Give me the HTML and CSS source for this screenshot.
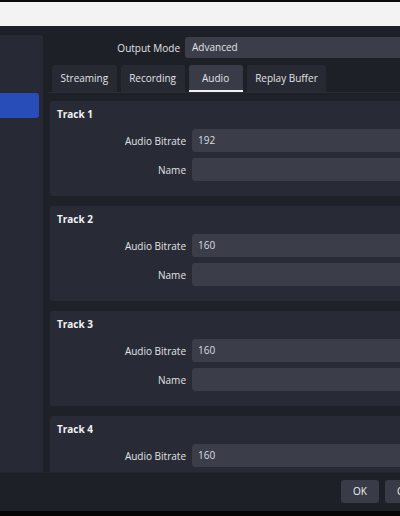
FILE: index.html
```html
<!DOCTYPE html>
<html>
<head>
<meta charset="utf-8">
<link rel="stylesheet" href="styles.css">
</head>
<body>
<div class="screen">
  <div class="topblack"></div>
  <div class="topstrip"></div>
  <div class="app">
    <div class="main">
      <div class="sidebar">
        <div class="side-item"></div>
        <div class="side-item selected"></div>
      </div>
      <div class="right">
        <div class="mode-row">
          <div class="mode-label">Output Mode</div>
          <div class="combo">Advanced</div>
        </div>
        <div class="tabs">
          <div class="tab">Streaming</div>
          <div class="tab">Recording</div>
          <div class="tab active">Audio</div>
          <div class="tab">Replay Buffer</div>
        </div>
        <div class="pane">
          <div class="group">
            <div class="group-title">Track 1</div>
            <div class="row"><div class="label">Audio Bitrate</div><div class="field">192</div></div>
            <div class="row"><div class="label">Name</div><div class="field"></div></div>
          </div>
          <div class="group">
            <div class="group-title">Track 2</div>
            <div class="row"><div class="label">Audio Bitrate</div><div class="field">160</div></div>
            <div class="row"><div class="label">Name</div><div class="field"></div></div>
          </div>
          <div class="group">
            <div class="group-title">Track 3</div>
            <div class="row"><div class="label">Audio Bitrate</div><div class="field">160</div></div>
            <div class="row"><div class="label">Name</div><div class="field"></div></div>
          </div>
          <div class="group">
            <div class="group-title">Track 4</div>
            <div class="row"><div class="label">Audio Bitrate</div><div class="field">160</div></div>
          </div>
        </div>
      </div>
    </div>
    <div class="bottom">
      <div class="buttons">
        <div class="btn">OK</div>
        <div class="btn">Cancel</div>
      </div>
    </div>
  </div>
  <div class="botblack"></div>
</div>
</body>
</html>
```
FILE: styles.css
```css
html, body {
  margin: 0;
  padding: 0;
  background: #000;
  overflow: hidden;
}
body {
  font-family: "Open Sans", "Noto Sans", sans-serif;
  font-size: 10px;
  color: #e2e3e7;
}
.screen {
  width: 460px;
  height: 516px;
  display: flex;
  flex-direction: column;
}
.topblack { height: 2px; background: #0a0a0b; flex: none; }
.topstrip { height: 24px; background: #f3f3f3; flex: none; }
.app {
  flex: 1;
  min-height: 0;
  display: flex;
  flex-direction: column;
  background: #1e2028;
}
.botblack { height: 5px; background: #050506; flex: none; }
.main {
  flex: 1;
  min-height: 0;
  display: flex;
  padding-top: 9px;
  overflow: hidden;
}
.sidebar {
  width: 43px;
  flex: none;
  background: #272a34;
  border-radius: 0 3px 0 0;
  padding-top: 33px;
  display: flex;
  flex-direction: column;
}
.side-item { height: 25px; width: 39px; }
.side-item.selected { background: #284cb8; border-radius: 0 3px 3px 0; }
.right {
  flex: 1;
  min-width: 0;
  margin-left: 5px;
  display: flex;
  flex-direction: column;
  padding-top: 2px;
}
.mode-row {
  display: flex;
  align-items: center;
  height: 21px;
  gap: 5px;
}
.mode-label {
  width: 132px;
  text-align: right;
  flex: none;
}
.combo {
  flex: 1;
  height: 21px;
  line-height: 21px;
  background: #3b3e49;
  border-radius: 3px 0 0 3px;
  padding-left: 7px;
}
.tabs {
  display: flex;
  gap: 4px;
  margin-top: 7px;
  margin-left: 4px;
  height: 27px;
}
.tab {
  padding: 0 8.5px;
  line-height: 27px;
  background: #272a33;
  border-radius: 3px 3px 0 0;
}
.tab.active {
  padding: 0 13.5px;
  background: #393c47;
  box-shadow: inset 0 -2px 0 #f0f0f2;
}
.pane {
  flex: 1;
  background: #1f2129;
  border-top: 1px solid #292c35;
  padding: 8px 0 0 2px;
  display: flex;
  flex-direction: column;
  gap: 10px;
}
.group {
  background: #282b35;
  border-radius: 3px 0 0 3px;
  padding: 5px 0 15px 0;
  display: flex;
  flex-direction: column;
  flex: none;
}
.group-title {
  font-weight: 700;
  height: 16px;
  line-height: 16px;
  padding-left: 7px;
  margin-bottom: 7px;
  color: #f2f3f5;
}
.row {
  display: flex;
  align-items: center;
  gap: 6px;
  height: 23px;
}
.row + .row { margin-top: 6px; }
.label {
  width: 136px;
  flex: none;
  text-align: right;
}
.field {
  flex: 1;
  height: 23px;
  line-height: 23px;
  background: #3b3e49;
  border-radius: 3px 0 0 3px;
  padding-left: 6px;
  color: #dcdde1;
}
.bottom {
  height: 39px;
  flex: none;
  display: flex;
  align-items: flex-start;
  padding-top: 7px;
  box-sizing: border-box;
  border-top: 1px solid #24262e;
}
.buttons {
  margin-left: 341px;
  display: flex;
  gap: 6px;
}
.btn {
  height: 23px;
  line-height: 23px;
  padding: 0 12px;
  background: #393c47;
  border-radius: 3px;
  color: #eeeff1;
}
```
